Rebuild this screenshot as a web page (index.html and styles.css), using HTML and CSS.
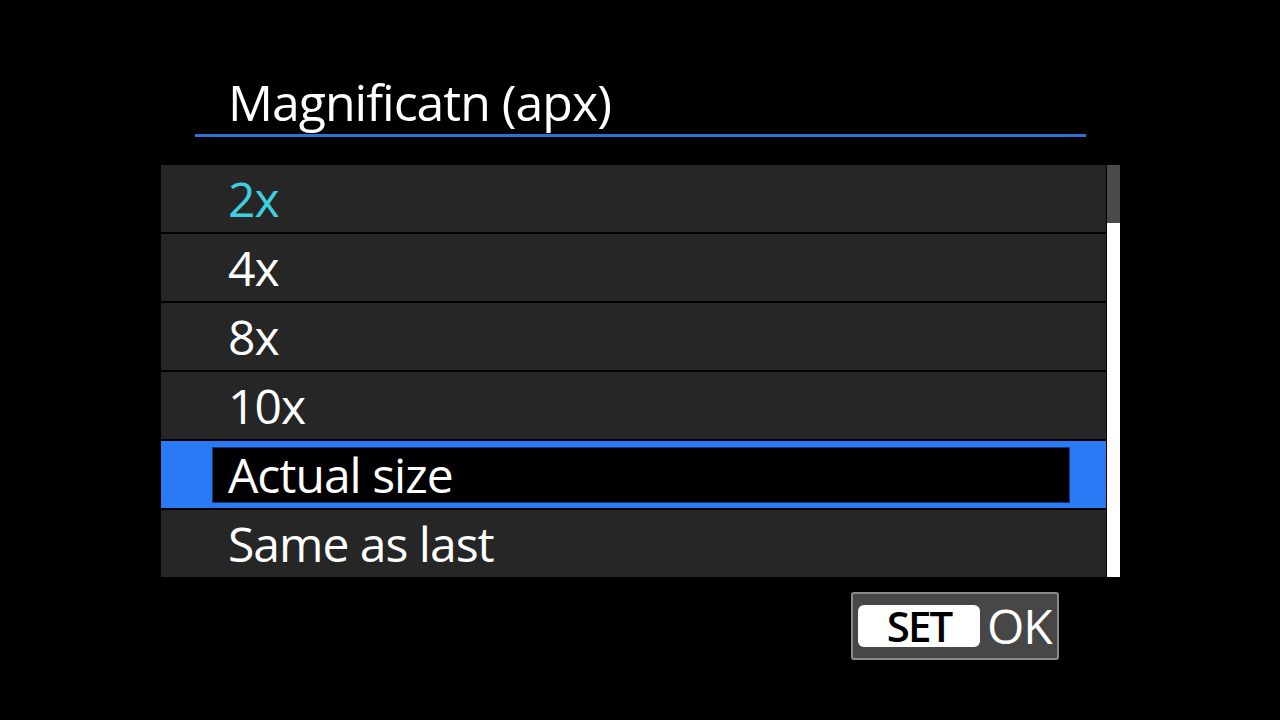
FILE: index.html
```html
<!DOCTYPE html>
<html lang="en">
<head>
  <meta charset="UTF-8">
  <meta name="viewport" content="width=device-width, initial-scale=1.0">
  <title>Magnificatn (apx)</title>
  <link rel="stylesheet" href="styles.css">
</head>
<body>
  <div class="screen">
    <h1 class="title">Magnificatn (apx)</h1>

    <div class="menu">
      <ul class="options">
        <li class="option current">2x</li>
        <li class="option">4x</li>
        <li class="option">8x</li>
        <li class="option">10x</li>
        <li class="option selected"><span class="cursor">Actual size</span></li>
        <li class="option">Same as last</li>
      </ul>
      <!-- barra de rolagem -->
      <div class="scrollbar">
        <div class="thumb"></div>
      </div>
    </div>

    <div class="footer">
      <div class="set-ok">
        <span class="set">SET</span>
        <span class="ok">OK</span>
      </div>
    </div>
  </div>
</body>
</html>
```

FILE: styles.css
```css
body {
  margin: 0;
  padding: 0;
  background-color: #000;
  font-family: "Open Sans", "Noto Sans", sans-serif;
  color: #fff;
}

.screen {
  width: 1280px;
  height: 720px;
  padding-top: 72px;
  box-sizing: border-box;
}

.title {
  margin: 0 0 0 195px;
  width: 891px;
  padding-left: 33px;
  padding-bottom: 2px;
  box-sizing: border-box;
  font-size: 50px;
  font-weight: 400;
  letter-spacing: -1px;
  line-height: 60px;
  border-bottom: 3px solid #2f6fd6;
}

.menu {
  display: flex;
  margin: 28px 0 0 161px;
  width: 959px;
}

.options {
  list-style: none;
  margin: 0;
  padding: 0;
  width: 945px;
  display: flex;
  flex-direction: column;
  gap: 2px;
}

.option {
  height: 67px;
  padding-left: 67px;
  background-color: #262626;
  font-size: 48px;
  letter-spacing: -1px;
  line-height: 67px;
}

.option.current {
  color: #3fcfe0;
}

.option.selected {
  display: flex;
  padding: 6px 36px 5px 51px;
  box-sizing: border-box;
  background-color: #2a79f5;
}

.cursor {
  flex: 1;
  padding-left: 16px;
  background-color: #000;
  box-shadow: inset 0 0 0 1px #123a78;
  line-height: 56px;
}

.scrollbar {
  width: 13px;
  margin-left: 1px;
  background-color: #fff;
}

.thumb {
  height: 58px;
  background-color: #4a4a4a;
}

.footer {
  display: flex;
  justify-content: flex-end;
  margin-top: 15px;
  width: 898px;
  margin-left: 161px;
}

.set-ok {
  display: flex;
  align-items: center;
  width: 208px;
  height: 68px;
  box-sizing: border-box;
  padding-left: 5px;
  background-color: #474747;
  border: 2px solid #8a8a8a;
  border-radius: 3px;
}

.set {
  width: 122px;
  height: 42px;
  background-color: #fff;
  color: #000;
  border-radius: 6px;
  text-align: center;
  font-size: 42px;
  font-weight: 600;
  letter-spacing: -2px;
  line-height: 42px;
}

.ok {
  margin-left: 7px;
  font-size: 48px;
  letter-spacing: -1px;
  line-height: 60px;
}
```
